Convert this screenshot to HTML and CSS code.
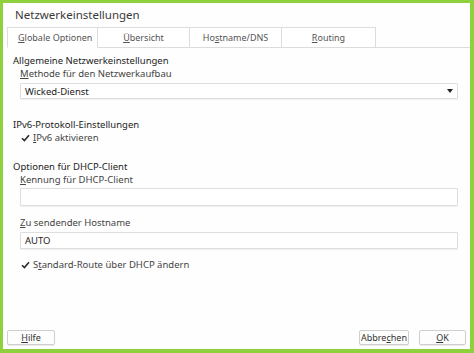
FILE: index.html
```html
<!DOCTYPE html>
<html lang="de">
    <head>
        <meta charset="UTF-8" />
        <title>Netzwerkeinstellungen</title>
        <link rel="stylesheet" href="styles.css">
    </head>
    <body>
        <div class="frame">
            <h1 class="title">Netzwerkeinstellungen</h1>
            <div class="tabs">
                <div class="tab active"><u>G</u>lobale Optionen</div>
                <div class="tab"><u>Ü</u>bersicht</div>
                <div class="tab">Ho<u>s</u>tname/DNS</div>
                <div class="tab wide"><u>R</u>outing</div>
            </div>

            <div class="content">
                <div class="section-title first">Allgemeine Netzwerkeinstellungen</div>
                <div class="field-label"><u>M</u>ethode für den Netzwerkaufbau</div>
                <div class="select">
                    <span>Wicked-Dienst</span>
                    <span class="arrow"></span>
                </div>

                <div class="section-title ipv6">IPv6-Protokoll-Einstellungen</div>
                <div class="check">
                    <svg class="tick" width="9" height="8" viewBox="0 0 9 8">
                        <path d="M1 4.2 L3.4 6.6 L8 1.2" fill="none" stroke="#2a2a2a" stroke-width="1.6" />
                    </svg>
                    <span><u>I</u>Pv6 aktivieren</span>
                </div>

                <div class="section-title dhcp">Optionen für DHCP-Client</div>
                <div class="field-label"><u>K</u>ennung für DHCP-Client</div>
                <div class="input tall"></div>
                <div class="field-label spaced"><u>Z</u>u sendender Hostname</div>
                <div class="input">AUTO</div>
                <div class="check route">
                    <svg class="tick" width="9" height="8" viewBox="0 0 9 8">
                        <path d="M1 4.2 L3.4 6.6 L8 1.2" fill="none" stroke="#2a2a2a" stroke-width="1.6" />
                    </svg>
                    <span>S<u>t</u>andard-Route über DHCP ändern</span>
                </div>
            </div>

            <div class="footer">
                <button class="btn help"><u>H</u>ilfe</button>
                <div class="spacer"></div>
                <button class="btn cancel">Abbre<u>c</u>hen</button>
                <button class="btn ok"><u>O</u>K</button>
            </div>
        </div>
    </body>
</html>
```

FILE: styles.css
```css
html,
body {
    margin: 0;
    padding: 0;
    height: 100%;
}

body {
    font-family: "Noto Sans", "Open Sans", sans-serif;
    font-size: 9.5px;
    color: #2e2e2e;
    background: #8fd13c;
}

u {
    text-decoration-thickness: 1px;
    text-underline-offset: 1px;
}

.frame {
    box-sizing: border-box;
    height: 100%;
    margin: 0 4px 0 3px;
    padding-bottom: 4px;
    border-top: 3px solid #8fd13c;
    border-bottom: 4px solid #8fd13c;
    background: #fefefe;
    display: flex;
    flex-direction: column;
}

.title {
    margin: 0;
    padding-left: 12px;
    height: 24px;
    line-height: 24px;
    font-size: 11.5px;
    font-weight: normal;
    color: #3a3a3a;
}

.tabs {
    display: flex;
    margin-left: 4px;
    height: 20px;
    border-bottom: 1px solid #dcdcdc;
}

.tab {
    box-sizing: border-box;
    width: 92px;
    height: 21px;
    line-height: 19px;
    text-align: center;
    border: 1px solid #dcdcdc;
    border-left: none;
    background: #fff;
    color: #555;
    font-size: 9px;
}

.tab.active {
    width: 91px;
    border-left: 1px solid #dcdcdc;
    text-align: left;
    padding-left: 10px;
    border-bottom-color: #fff;
}

.tab.wide {
    width: 94px;
}

.content {
    padding-left: 10px;
    padding-right: 12px;
}

.section-title {
    line-height: 13px;
    color: #222;
}

.section-title.first {
    margin-top: 6px;
}

.section-title.ipv6 {
    margin-top: 19px;
}

.section-title.dhcp {
    margin-top: 16px;
}

.field-label {
    margin-left: 7px;
    line-height: 13px;
    color: #444;
}

.field-label.spaced {
    margin-top: 10px;
}

.select,
.input {
    box-sizing: border-box;
    margin: 3px 0 0 7px;
    height: 17px;
    padding-left: 4px;
    line-height: 15px;
    border: 1px solid #dedede;
    border-radius: 1px;
    background: #fff;
    box-shadow: 0 1px 1px rgba(0, 0, 0, 0.06);
    color: #222;
    display: flex;
    align-items: center;
}

.select {
    height: 16px;
    justify-content: space-between;
    padding-right: 4px;
}

.input.tall {
    height: 18px;
    margin-top: 2px;
}

.arrow {
    width: 0;
    height: 0;
    border-left: 3.5px solid transparent;
    border-right: 3.5px solid transparent;
    border-top: 4px solid #222;
}

.check {
    margin-left: 8px;
    line-height: 13px;
    display: flex;
    align-items: center;
    gap: 3px;
    color: #444;
}

.check.route {
    margin-top: 9px;
}

.footer {
    margin-top: auto;
    display: flex;
    align-items: center;
    padding: 0 4px;
}

.spacer {
    flex: 1;
}

.btn {
    box-sizing: border-box;
    height: 15px;
    padding: 0;
    font-family: inherit;
    font-size: 9px;
    color: #333;
    background: #fdfdfd;
    border: 1px solid #cfcfcf;
    border-radius: 2px;
    box-shadow: 0 1px 1px rgba(0, 0, 0, 0.08);
}

.help {
    width: 48px;
}

.cancel {
    width: 50px;
    margin-right: 10px;
}

.ok {
    width: 47px;
}
```
